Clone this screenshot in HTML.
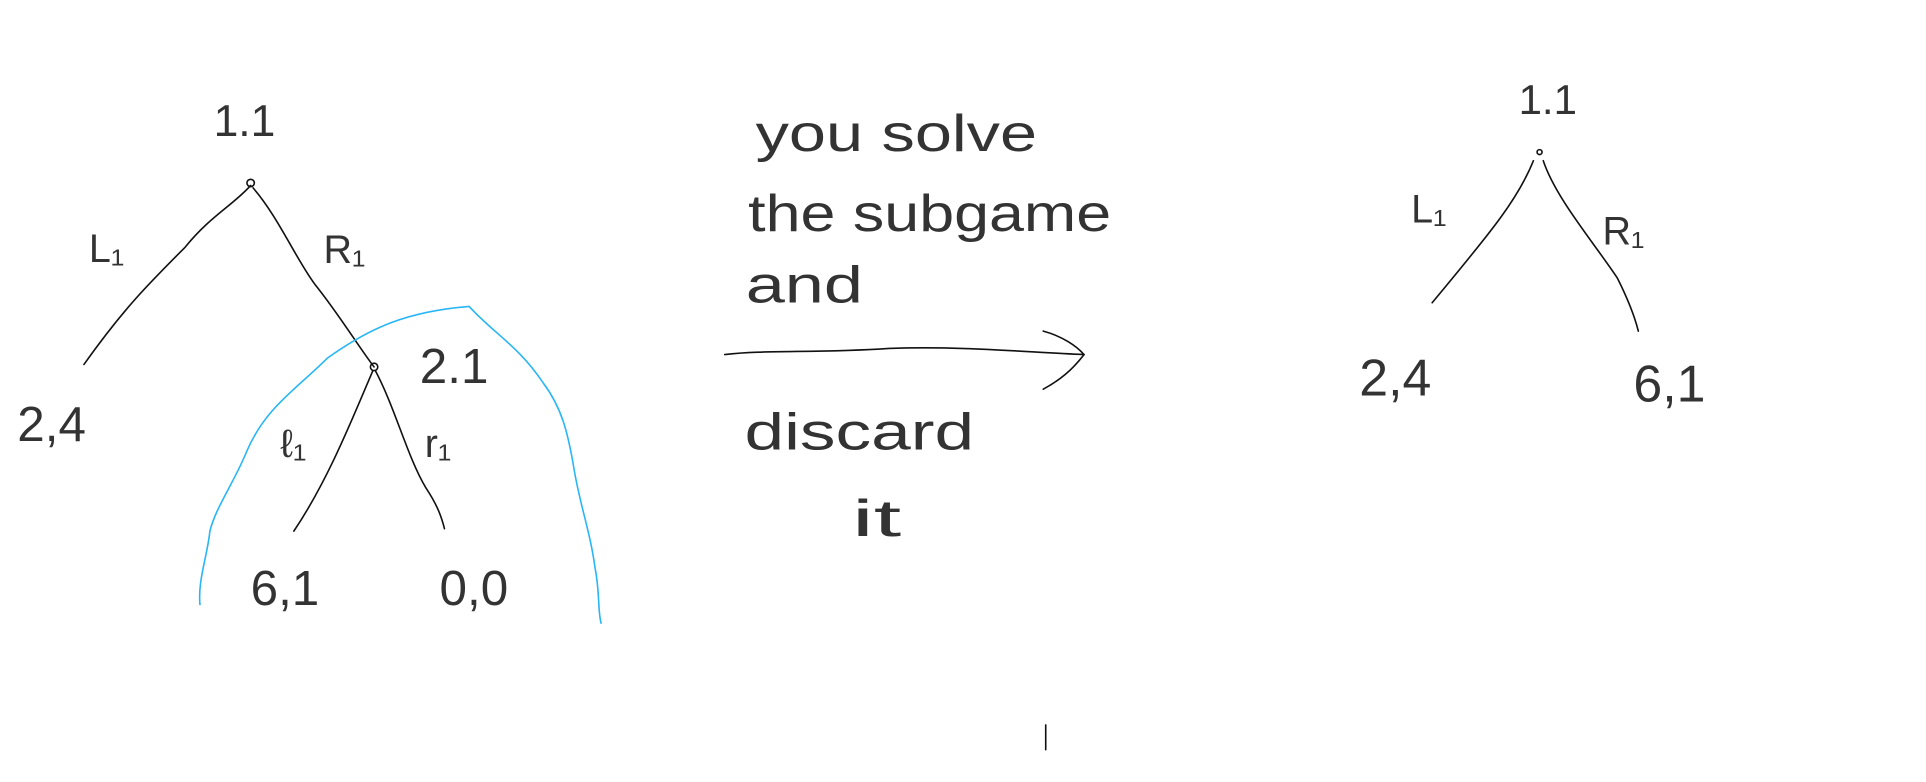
<!DOCTYPE html>
<html><head><meta charset="utf-8"><style>
html,body{margin:0;padding:0;background:#fff;}
svg{display:block}
text{font-family:"Liberation Sans",sans-serif;fill:#333;}
</style></head><body>
<svg width="1926" height="782" viewBox="0 0 1560 633" xmlns="http://www.w3.org/2000/svg">
<g fill="none" stroke="#111" stroke-width="1.3" stroke-linecap="round">
<path d="M203 150 C190 165 170 175 150 200 C120 230 100 250 68 295"/>
<path d="M205 152 C225 175 240 210 255 230 C275 255 290 280 303 297"/>
<circle cx="203" cy="148" r="3"/>
<circle cx="303" cy="297" r="3"/>
<path d="M302 300 C285 340 265 390 238 430"/>
<path d="M304 300 C320 330 330 370 345 395 C355 410 358 420 360 428"/>
<path d="M587 287 C620 283 660 286 720 282 C780 280 830 285 878 287"/>
<path d="M845 268 C860 272 872 280 878 287 C868 300 858 308 845 315"/>
<path d="M847 587 L847 607"/>
<circle cx="1247" cy="123" r="2"/>
<path d="M1242 130 C1230 160 1210 185 1160 245"/>
<path d="M1250 130 C1260 160 1290 195 1310 225 C1320 245 1325 260 1327 268"/>
</g>
<path d="M162 490 C160 470 168 450 170 430 C175 410 190 390 200 365 C215 330 240 315 265 290 C300 265 330 252 380 248 C400 270 420 280 440 310 C455 330 460 350 465 380 C470 410 478 430 482 460 C486 480 484 495 487 505" fill="none" stroke="#29b6f6" stroke-width="1.3"/>
<g>
<text x="173" y="110" font-size="36">1.1</text>
<text x="72" y="212" font-size="32">L₁</text>
<text x="262" y="213" font-size="32">R₁</text>
<text x="14" y="357" font-size="40">2,4</text>
<text x="340" y="310" font-size="40">2.1</text>
<text x="227" y="370" font-size="32">ℓ₁</text>
<text x="344" y="370" font-size="32">r₁</text>
<text x="203" y="490" font-size="40">6,1</text>
<text x="356" y="490" font-size="40">0,0</text>
<text x="612" y="122" font-size="42" textLength="228" lengthAdjust="spacingAndGlyphs">you solve</text>
<text x="606" y="187" font-size="42" textLength="294" lengthAdjust="spacingAndGlyphs">the subgame</text>
<text x="604" y="245" font-size="42" textLength="95" lengthAdjust="spacingAndGlyphs">and</text>
<text x="603" y="364" font-size="42" textLength="186" lengthAdjust="spacingAndGlyphs">discard</text>
<text x="690" y="434" font-size="42" textLength="40" lengthAdjust="spacingAndGlyphs">it</text>
<text x="1230" y="92" font-size="34">1.1</text>
<text x="1143" y="180" font-size="32">L₁</text>
<text x="1298" y="198" font-size="32">R₁</text>
<text x="1101" y="320" font-size="42">2,4</text>
<text x="1323" y="325" font-size="42">6,1</text>
</g>
</svg>
</body></html>
